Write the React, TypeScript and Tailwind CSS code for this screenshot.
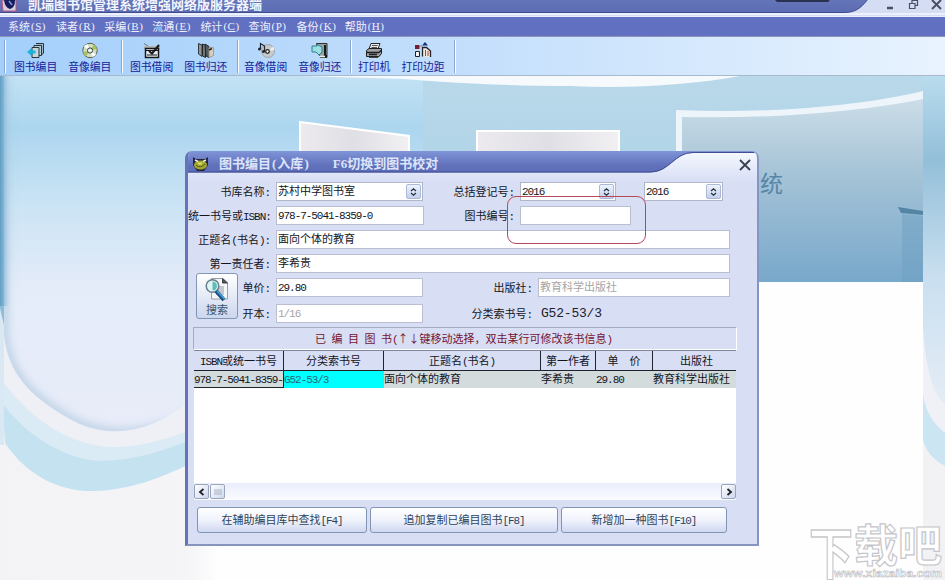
import type { ReactNode } from "react";

const MENUS = [
  ["系统", "S"],
  ["读者", "R"],
  ["采编", "B"],
  ["流通", "E"],
  ["统计", "C"],
  ["查询", "P"],
  ["备份", "K"],
  ["帮助", "H"],
];

const BOOKS = [
  {
    isbn: "978-7-5041-8359-",
    callNo: "G52-53/3",
    title: "面向个体的教育",
    author: "李希贵",
    price: "29.80",
    publisher: "教育科学出版社",
  },
];

/* Half-width runs are set in mono so every latin glyph is half a hanzi wide */
function Txt({ children }: { children: string }) {
  return (
    <>
      {children.split(/([\x21-\x7e]+)/).map((part, i) =>
        i % 2 ? (
          <span
            key={i}
            className="font-['Liberation_Mono',monospace] text-[11px] tracking-[-1.05px]"
          >
            {part}
          </span>
        ) : (
          part
        ),
      )}
    </>
  );
}

function Icon({ children }: { children: ReactNode }) {
  return (
    <svg width="18" height="17" viewBox="0 0 18 17" fill="none">
      {children}
    </svg>
  );
}

const BooksIcon = (
  <Icon>
    <path d="M9 1.500H16.500V11L14.500 13" fill="#9db8c4" stroke="#28343f" />
    <path d="M7 3.500H14.500V13.500H7Z" fill="#b7ccd5" stroke="#28343f" />
    <path d="M5 5.500H12V15.500H5Z" fill="#c3d6dd" stroke="#28343f" />
    <path d="M0 10L4 6.500V8.500H8.500V11.500H4V13.500Z" fill="#17b6dd" />
  </Icon>
);

const DiscIcon = (
  <Icon>
    <circle cx="9" cy="8.500" r="7.200" fill="#d5dfc5" stroke="#56604f" />
    <path d="M9 8.500L3 4.500A7 7 0 0 1 6.500 2ZM9 8.500L15 12.500A7 7 0 0 1 11.500 15Z" fill="#fff" />
    <path d="M9 8.500L13 2.500A7 7 0 0 1 16 7ZM9 8.500L5 14.500A7 7 0 0 1 2 10Z" fill="#a5c05c" />
    <circle cx="9" cy="8.500" r="2.600" fill="#eef4f4" stroke="#39443e" />
  </Icon>
);

const LendIcon = (
  <Icon>
    <path d="M1 4H17V7H1Z" fill="#b5b8b8" />
    <path d="M2.500 6.500H15.500V15.500H2.500Z" fill="#e8ecec" stroke="#16181c" strokeWidth="1.500" />
    <path d="M3 8.500H15M4 13H14" stroke="#16181c" />
    <path d="M6 9L9 11.500L16 3" stroke="#16181c" strokeWidth="2" />
    <path d="M1 1.500L5 4" stroke="#777" />
  </Icon>
);

const ReturnIcon = (
  <Icon>
    <path d="M1.500 1.500L5 3V14.500L1.500 12Z" fill="#8f9697" stroke="#33383d" />
    <path d="M5.500 2L8.500 3.500V15.500L5.500 14Z" fill="#6f7778" stroke="#23282d" />
    <path d="M8 2L12 4.500V15.500L9 14Z" fill="#555d60" stroke="#23282d" />
    <path d="M12 5.500H16.500V13.500L12 15.500Z" fill="#d9cfc0" stroke="#a49b8f" />
    <path d="M12 8L15 6.500" stroke="#222" strokeWidth="1.500" />
  </Icon>
);

const MusicIcon = (
  <Icon>
    <circle cx="11" cy="9" r="6.500" fill="#c7c9cc" stroke="#a2a5a8" />
    <path d="M11 9L16 4.500A7 7 0 0 1 17.500 8Z" fill="#eceded" />
    <circle cx="10.500" cy="9.500" r="1.800" fill="#fff" stroke="#222" strokeWidth="1.300" />
    <path d="M3.500 7V1.500L7.500 4V9" stroke="#20242c" strokeWidth="1.200" />
    <circle cx="2.500" cy="7" r="1.500" fill="#20242c" />
    <circle cx="6.500" cy="9.500" r="1.500" fill="#20242c" />
  </Icon>
);

const MediaReturnIcon = (
  <Icon>
    <path d="M5.500 1.500H16V15.500H9Z" fill="#9aa3a4" stroke="#2b3033" />
    <path d="M14 3V14H16" stroke="#171b1e" strokeWidth="2" />
    <path d="M1 4H6V2.500L11 5V10L8 13L5 10H1Z" fill="#9be0e3" stroke="#2f7c8b" />
    <path d="M8 14.500H14" stroke="#e8f0f0" strokeWidth="1.500" />
  </Icon>
);

const PrinterIcon = (
  <Icon>
    <path d="M6 1.500H15L13 7H4Z" fill="#e9e9e6" stroke="#26282b" />
    <path d="M7 3.500H12.500M6.500 5.500H12" stroke="#555" />
    <path d="M1.500 8.500L4 6.500H16.500V11.500L14 14.500H1.500Z" fill="#9fa1a0" stroke="#1d1f22" />
    <path d="M2 10.500H14L16 8.500M4 12.500H12" stroke="#1d1f22" strokeWidth="1.400" />
    <path d="M4 15.500H13L15 13" stroke="#444" />
  </Icon>
);

const MarginIcon = (
  <Icon>
    <path d="M1 3H5.500V7H1Z" fill="#7c1d28" />
    <path d="M1.500 9.500H5.500V14.500H1.500Z" fill="#f2f2f2" stroke="#222" />
    <path d="M11 0L14 3.500H8Z" fill="#1c2c78" />
    <path d="M8.500 14.500V5.500H12.500L16.500 9V15" fill="#f1e7dd" stroke="#202228" strokeWidth="1.300" />
    <path d="M11.500 8V14M14 9V14" stroke="#b0423b" />
    <path d="M6.500 4H8" stroke="#222" strokeDasharray="1 1" />
  </Icon>
);

function Tool({ label, icon }: { label: string; icon: ReactNode }) {
  return (
    <button className="flex flex-col items-center pt-[5px] text-[10.8px] leading-[14px] whitespace-nowrap text-[#13219a]">
      {icon}
      <span>{label}</span>
    </button>
  );
}

function ToolSep() {
  return <div className="mt-[3px] h-[33px] w-[2px] border-l border-[#8aa6cf] bg-white" />;
}

function Label({ children, className = "" }: { children: string; className?: string }) {
  return (
    <div
      className={`h-[19px] shrink-0 text-right text-[11px] leading-[19px] whitespace-nowrap text-[#14151c] ${className}`}
    >
      <Txt>{children}</Txt>
    </div>
  );
}

function Field({
  value = "",
  color = "text-[#14151c]",
  className = "",
}: {
  value?: string;
  color?: string;
  className?: string;
}) {
  return (
    <div
      className={`h-[19px] shrink-0 border border-[#b9bed0] bg-white pl-[1px] text-[11px] leading-[15px] whitespace-nowrap ${color} ${className}`}
    >
      <Txt>{value}</Txt>
    </div>
  );
}

function Combo({ value, className = "" }: { value: string; className?: string }) {
  return (
    <div
      className={`flex h-[19px] shrink-0 justify-between border border-[#b0b7cb] bg-white pl-[1px] text-[11px] leading-[15px] text-[#14151c] ${className}`}
    >
      <span>
        <Txt>{value}</Txt>
      </span>
      <span className="m-px flex w-[15px] items-center justify-center rounded-[2px] border border-[#a9b9d6] bg-gradient-to-b from-[#eef3fe] to-[#c3d1ec]">
        <svg width="7" height="8" viewBox="0 0 7 8" fill="none" stroke="#2a3040" strokeWidth="1.2">
          <path d="M1 3L3.500 0.800L6 3M1 5L3.500 7.200L6 5" />
        </svg>
      </span>
    </div>
  );
}

function Wallpaper() {
  return (
    <svg className="absolute inset-0" width="945" height="504" viewBox="0 76 945 504">
      <defs>
        <linearGradient id="sky" x1="0" y1="0" x2="0" y2="1">
          <stop offset="0" stopColor="#c3e2f4" />
          <stop offset="0.14" stopColor="#acd6ef" />
          <stop offset="0.36" stopColor="#cce4f5" />
          <stop offset="0.58" stopColor="#e5ecf9" />
          <stop offset="1" stopColor="#e9ecf9" />
        </linearGradient>
        <linearGradient id="wall" x1="0" y1="0" x2="0" y2="1">
          <stop offset="0" stopColor="#b9d9ea" />
          <stop offset="0.35" stopColor="#b3d5e8" />
          <stop offset="1" stopColor="#9fc5dc" />
        </linearGradient>
        <linearGradient id="panel" x1="0" y1="0" x2="0" y2="1">
          <stop offset="0" stopColor="#cbdde8" />
          <stop offset="0.4" stopColor="#a6c4d7" />
          <stop offset="1" stopColor="#78a8cb" />
        </linearGradient>
        <linearGradient id="edge" x1="0" y1="0" x2="1" y2="0">
          <stop offset="0" stopColor="#5f9cc4" />
          <stop offset="1" stopColor="#a9d2ea" stopOpacity="0" />
        </linearGradient>
        <linearGradient id="strip" x1="0" y1="0" x2="0" y2="1">
          <stop offset="0" stopColor="#b9dcee" />
          <stop offset="0.25" stopColor="#93bfd9" />
          <stop offset="0.6" stopColor="#c9dfef" />
          <stop offset="1" stopColor="#e6edf7" />
        </linearGradient>
        <linearGradient id="box" x1="0" y1="0" x2="1" y2="0">
          <stop offset="0" stopColor="#eceaee" />
          <stop offset="0.5" stopColor="#dfdfe5" />
          <stop offset="1" stopColor="#f2f0f2" />
        </linearGradient>
        <linearGradient id="floor" x1="0" y1="0" x2="1" y2="0">
          <stop offset="0" stopColor="#f3f3f6" />
          <stop offset="0.2" stopColor="#f5f4f7" />
          <stop offset="0.23" stopColor="#fefefe" />
          <stop offset="1" stopColor="#fefefe" />
        </linearGradient>
        <filter id="soft">
          <feGaussianBlur stdDeviation="4" />
        </filter>
        <clipPath id="bowl">
          <path d="M4 76H423V400H190C150 435 105 440 68 418C28 395 8 372 4 335Z" />
        </clipPath>
      </defs>

      <rect y="76" width="945" height="504" fill="url(#floor)" />

      {/* ribbons below the left bowl */}
      <path d="M0 315V360L5 443C30 480 65 492 95 491C130 490 160 478 190 464V300Z" fill="#c5e2f1" />
      <path d="M0 310L4 405C30 440 70 460 100 461C135 460 160 452 190 440V300Z" fill="#dbebf5" />
      <path d="M0 310L4 383C35 425 75 445 110 447C140 447 165 440 190 430V300Z" fill="#eff0f6" />
      <path d="M0 76H10V335L4 330L0 312Z" fill="#8dbbd8" />
      <g clipPath="url(#bowl)">
        <rect y="76" width="423" height="370" fill="url(#sky)" />
        <path
          d="M4 76V335C8 372 28 395 68 418C105 440 150 435 190 416"
          fill="none"
          stroke="#a9c6dc"
          strokeWidth="8"
          opacity="0.75"
          filter="url(#soft)"
        />
      </g>
      <rect y="76" width="10" height="230" fill="url(#edge)" />
      <path d="M0 308V445H4V325Z" fill="#d9e8f3" />

      {/* back wall */}
      <rect x="423" y="76" width="500" height="206" fill="url(#wall)" />
      <path d="M300 76H740C690 85 630 89 570 86C500 86 440 82 405 79Z" fill="#f6fafd" />
      <path d="M300 122L409 136V155H300Z" fill="url(#box)" stroke="#fff" strokeWidth="2" />
      <path d="M477 131H619V155H477Z" fill="url(#box)" stroke="#fff" strokeWidth="2" />

      <path d="M676 110C770 114 860 106 923 91V282H676Z" fill="#edf5fa" />
      <path d="M682 117C770 119 860 112 923 99V282H682Z" fill="url(#panel)" />
      <path d="M898 207L923 211V215L901 213Z" fill="#5585a5" />
      <path d="M902 214L923 216V282H902Z" fill="#6d9fc2" opacity="0.5" />
      <text
        x="760"
        y="192"
        fontSize="23"
        fill="#5886a6"
        fontFamily="'Noto Sans CJK SC', sans-serif"
      >
        统
      </text>

      {/* right column */}
      <path d="M923 76H945V580H923Z" fill="#f2f2f5" />
      <path d="M923 76H945V410C934 396 926 375 923 330Z" fill="url(#strip)" />
      <path d="M923 330C926 372 934 394 945 405V433C934 425 926 412 923 395Z" fill="#eff1f6" />
      <path d="M923 395C926 412 934 425 945 433V466C934 460 926 452 923 440Z" fill="#cbe5f2" />
    </svg>
  );
}

function TitleTab() {
  return (
    <svg className="absolute top-0 left-0" width="570" height="31" viewBox="0 0 570 31">
      <defs>
        <linearGradient id="tab" x1="0" y1="0" x2="0" y2="1">
          <stop offset="0" stopColor="#f4f7ff" />
          <stop offset="1" stopColor="#d8def4" />
        </linearGradient>
      </defs>
      <path
        d="M0 21.500H462C482 21.500 486 2 505 2H566Q570 2 570 6V31H0Z"
        fill="url(#tab)"
      />
      <path d="M0 21H462C482 21 486 1.500 505 1.500H566" fill="none" stroke="#414d92" />
    </svg>
  );
}

function SearchButton() {
  return (
    <button className="ml-2 flex h-[46px] w-[42px] shrink-0 flex-col items-center rounded-[3px] border border-[#8195b5] bg-gradient-to-b from-white to-[#ccd6ee] pt-[3px]">
      <svg width="26" height="25" viewBox="0 0 26 25" fill="none">
        <path d="M7.500 1.500H19L23.500 6V22H7.500Z" fill="#f5f6f8" stroke="#9a9ea6" />
        <path d="M18.500 1.500V6H23.500Z" fill="#4c5157" stroke="#444" />
        <path d="M12 9H20V18H12Z" fill="#c5c8d0" />
        <circle cx="8.500" cy="9" r="6.300" fill="#dff4f4" stroke="#6b7e8b" strokeWidth="1.500" />
        <path d="M8.500 4.500A4.500 4.500 0 0 1 8.500 13.500Z" fill="#62bcb9" />
        <path d="M12 14L20 23" stroke="#1d4f83" strokeWidth="4" />
        <path d="M13 14L20.500 22" stroke="#3aa0d8" strokeWidth="1.800" />
      </svg>
      <span className="text-[11px] leading-[15px] text-[#35546f]">搜索</span>
    </button>
  );
}

function ScrollCap({ children }: { children: ReactNode }) {
  return (
    <span className="flex h-[15px] w-[15px] items-center justify-center rounded-[2px] border border-[#9aa5bd] bg-gradient-to-br from-white to-[#cdd7ee]">
      <svg width="10" height="10" viewBox="0 0 10 10" fill="none">
        {children}
      </svg>
    </span>
  );
}

function BookTable() {
  const head = "border-r border-[#20222c] last:border-r-0";
  return (
    <div className="mx-[6px] h-[150px] w-[542px] border-t border-[#7f8598] bg-white text-[11px] text-[#14151c]">
      <div className="grid h-[20px] grid-cols-[90px_100px_157px_55px_57px_83px] grid-rows-[19px] border-b border-[#20222c] bg-[#d8def4] text-center leading-[19px] whitespace-nowrap">
        <span className={head}>
          <Txt>ISBN或统一书号</Txt>
        </span>
        <span className={head}>分类索书号</span>
        <span className={head}>
          <Txt>正题名(书名)</Txt>
        </span>
        <span className={head}>第一作者</span>
        <span className={head}>单&emsp;价</span>
        <span className={`${head} pl-1`}>出版社</span>
      </div>
      {BOOKS.map((b) => (
        <div
          key={b.isbn}
          className="grid h-[17px] grid-cols-[90px_100px_157px_55px_57px_83px] grid-rows-[17px] bg-[#d3dbdc] leading-[15px] whitespace-nowrap"
        >
          <span className="border-r border-b border-[#20222c]">
            <Txt>{b.isbn}</Txt>
          </span>
          <span className="bg-[#00ffff] text-[#25697c]">
            <Txt>{b.callNo}</Txt>
          </span>
          <span>{b.title}</span>
          <span>{b.author}</span>
          <span>
            <Txt>{b.price}</Txt>
          </span>
          <span>{b.publisher}</span>
        </div>
      ))}
      <div className="mt-[95px] flex h-[17px] items-center justify-between bg-gradient-to-b from-[#e9eefb] to-[#fafbff]">
        <div className="flex gap-px">
          <ScrollCap>
            <path d="M6.500 2L3 5L6.500 8" stroke="#222" strokeWidth="1.800" />
          </ScrollCap>
          <ScrollCap>
            <path d="M1 3H9M1 5H9M1 7H9" stroke="#aab2c4" />
          </ScrollCap>
        </div>
        <ScrollCap>
          <path d="M3.500 2L7 5L3.500 8" stroke="#222" strokeWidth="1.800" />
        </ScrollCap>
      </div>
    </div>
  );
}

function ActionButton({ label, className }: { label: string; className: string }) {
  return (
    <button
      className={`h-[26px] rounded-[3px] border border-[#8294b4] bg-gradient-to-b from-white via-[#f0f3fc] to-[#cfd8f0] text-[11px] leading-[22px] text-[#2f4358] ${className}`}
    >
      <Txt>{label}</Txt>
    </button>
  );
}

function CatalogDialog() {
  return (
    <div className="absolute top-[75px] left-[185px] h-[395px] w-[574px] overflow-hidden rounded-t-[7px] border-r-2 border-b-2 border-l-[3px] border-r-[#8795c4] border-b-[#8795bd] border-l-[#6673b8] bg-[#d8def4]">
      <div className="relative flex h-[31px] items-start bg-gradient-to-b from-[#8094d8] via-[#5f6fb9] to-[#5c6bb4]">
        <TitleTab />
        <svg className="relative mt-[5px] ml-1" width="17" height="16" viewBox="0 0 17 16">
          <path d="M1 1L4 3H13L16 1V9L12 15H5L1 9Z" fill="#26283a" />
          <ellipse cx="8.500" cy="9" rx="6.500" ry="4.500" fill="#a3a632" />
          <path d="M3 4L6 5.500M14 4L11 5.500" stroke="#e9edf5" strokeWidth="1.500" />
          <path d="M4 9Q8 13 13 8" stroke="#555b14" fill="none" />
          <ellipse cx="8" cy="7.500" rx="2.500" ry="1.300" fill="#d6d765" />
        </svg>
        <h2 className="relative pt-[4px] pl-[10px] font-['Liberation_Serif','Noto_Sans_CJK_SC',serif] text-[13px] leading-[18px] font-bold whitespace-pre text-[#dce4fa]">
          图书编目<span className="mx-[1px]">(</span>入库<span className="mx-[1px]">)</span>
          <span className="ml-[23px]">F6</span>切换到图书校对
        </h2>
        <svg
          className="relative mt-[8px] mr-[6px] ml-auto"
          width="12"
          height="12"
          viewBox="0 0 12 12"
          stroke="#3a4054"
          strokeWidth="1.800"
        >
          <path d="M1 1L11 11M11 1L1 11" />
        </svg>
      </div>

      <div className="flex">
        <Label className="w-[88px] pr-[6px]">书库名称:</Label>
        <Combo value="苏村中学图书室" className="w-[147px]" />
        <Label className="w-[97px] pr-[6px]">总括登记号:</Label>
        <Combo value="2016" className="w-[96px]" />
        <Combo value="2016" className="ml-[28px] w-[79px]" />
      </div>
      <div className="mt-[5px] flex">
        <Label className="w-[88px] pr-[6px]">统一书号或ISBN:</Label>
        <Field value="978-7-5041-8359-0" className="w-[148px]" />
        <Label className="w-[96px] pr-[6px]">图书编号:</Label>
        <Field className="w-[111px]" />
      </div>
      <div className="mt-[5px] flex">
        <Label className="w-[88px] pr-[6px]">正题名(书名):</Label>
        <Field value="面向个体的教育" className="w-[454px]" />
      </div>
      <div className="mt-[5px] flex">
        <Label className="w-[88px] pr-[6px]">第一责任者:</Label>
        <Field value="李希贵" className="w-[454px]" />
      </div>
      <div className="flex h-[50px]">
        <SearchButton />
        <div className="pt-[5px]">
          <div className="flex">
            <Label className="w-[38px] pr-[6px]">单价:</Label>
            <Field value="29.80" className="w-[147px]" />
            <Label className="w-[115px] pr-[6px]">出版社:</Label>
            <Field value="教育科学出版社" color="text-[#a5a5a5]" className="w-[192px]" />
          </div>
          <div className="mt-[7px] flex">
            <Label className="w-[38px] pr-[6px]">开本:</Label>
            <Field value="1/16" color="text-[#a5a5a5]" className="w-[147px]" />
            <Label className="w-[115px] pr-[6px]">分类索书号:</Label>
            <span className="h-[19px] pl-[3px] font-['Liberation_Mono',monospace] text-[13px] leading-[20px] tracking-[-0.2px] text-[#20222c]">
              G52-53/3
            </span>
          </div>
        </div>
      </div>

      <div className="mx-[5px] mt-[4px] h-[23px] w-[544px] border border-[#a7adc0] border-r-white border-b-white pr-[3px] text-center text-[11px] leading-[21px] whitespace-nowrap text-[#741431]">
        <span className="tracking-[5.500px]">已编目图</span>书
        <Txt>(↑↓键移动选择，双击某行可修改该书信息)</Txt>
      </div>
      <BookTable />

      <div className="mt-[7px] ml-[9px] flex gap-[3px]">
        <ActionButton label="在辅助编目库中查找[F4]" className="w-[170px]" />
        <ActionButton label="追加复制已编目图书[F8]" className="w-[188px]" />
        <ActionButton label="新增加一种图书[F10]" className="w-[166px]" />
      </div>
    </div>
  );
}

function Watermark() {
  return (
    <svg className="absolute top-[440px] left-[800px]" width="145" height="64" viewBox="0 0 145 64">
      <g
        fill="#ffffff"
        stroke="#c6c6ca"
        fontFamily="'Noto Sans CJK SC', sans-serif"
        fontWeight="bold"
      >
        {/* the first glyph is stretched down past the other two */}
        <text x="9" y="45" fontSize="44" strokeWidth="1.100" transform="matrix(1 0 0 1.300 0 -1)">
          下
        </text>
        <text x="54" y="46" fontSize="44" strokeWidth="1.200">
          载吧
        </text>
        <text
          x="34"
          y="61"
          fontSize="11"
          textLength="108"
          lengthAdjust="spacingAndGlyphs"
          strokeWidth="0.500"
          stroke="#b4b4ba"
          fontFamily="'Liberation Sans', sans-serif"
        >
          www.xiazaiba.com
        </text>
      </g>
    </svg>
  );
}

export default function App() {
  return (
    <div className="flex h-[580px] w-[945px] flex-col overflow-hidden font-['Noto_Sans_CJK_SC',sans-serif]">
      <header className="relative flex h-[17px] shrink-0 items-start overflow-hidden border-b border-[#e8edfb] bg-gradient-to-b from-[#6575b9] to-[#5a69b0]">
        <svg className="absolute inset-0" width="945" height="17" viewBox="0 0 945 17">
          <path d="M0 12.500H845C858 12.500 864 4 868 -1H945V17H0Z" fill="#d5ddf5" />
          <path d="M0 12.500H845C858 12.500 864 4 868 -1" fill="none" stroke="#3f4c8f" />
          <path d="M0 14H945" stroke="#f4f7ff" strokeWidth="1.500" />
          <path d="M775 0H830L828 2H777Z" fill="#283150" />
          <path d="M2 0H16V11H3Z" fill="#d9cfe4" stroke="#b1597a" />
          <path d="M4 0H15Q15 8 10 9Q5 8 4 0Z" fill="#151c5c" />
          <path d="M9 1L12 5" stroke="#7e92e6" strokeWidth="1.500" />
          <path d="M887 8H893" stroke="#4a4f63" strokeWidth="2.500" />
          <path d="M909.500 3.500H915V8.500H909.500ZM912 3V0.500H917.500V5.500H915" fill="none" stroke="#4a4f63" strokeWidth="1.200" />
          <path d="M932 0L941 9M941 0L932 9" stroke="#4a4f63" strokeWidth="2" />
        </svg>
        <h1 className="relative -mt-[5px] ml-[28px] text-[13px] leading-[18px] font-bold text-[#f2f5ff]">
          凯瑞图书馆管理系统增强网络版服务器端
        </h1>
      </header>

      <nav className="flex h-[19px] shrink-0 items-center bg-[#6170c0] pl-2 text-[11px] leading-[17px] text-[#edf1ff]">
        {MENUS.map(([name, key]) => (
          <span key={key} className="flex w-[48.1px] whitespace-nowrap">
            {name}
            <span className="ml-[1px] font-['Liberation_Serif',serif] text-[11px] tracking-[0.5px]">
              (<u>{key}</u>)
            </span>
          </span>
        ))}
      </nav>

      <div className="flex h-[40px] shrink-0 border-t border-b border-t-[#8d94b8] border-b-[#a9b9cc] bg-gradient-to-r from-[#a4cffb] via-[#c4dffc] to-[#e8f3fe] pl-[4px]">
        <ToolSep />
        <div className="flex w-[115px] gap-[11px] pl-[8px]">
          <Tool label="图书编目" icon={BooksIcon} />
          <Tool label="音像编目" icon={DiscIcon} />
        </div>
        <ToolSep />
        <div className="flex w-[114px] gap-[11px] pl-[7px]">
          <Tool label="图书借阅" icon={LendIcon} />
          <Tool label="图书归还" icon={ReturnIcon} />
        </div>
        <ToolSep />
        <div className="flex w-[111px] gap-[11px] pl-[5px]">
          <Tool label="音像借阅" icon={MusicIcon} />
          <Tool label="音像归还" icon={MediaReturnIcon} />
        </div>
        <ToolSep />
        <div className="flex w-[102px] gap-[11px] pl-[6px]">
          <Tool label="打印机" icon={PrinterIcon} />
          <Tool label="打印边距" icon={MarginIcon} />
        </div>
        <ToolSep />
      </div>

      <main className="relative h-[504px] shrink-0">
        <Wallpaper />
        <CatalogDialog />
        {/* hand-drawn callout around the book number field */}
        <div className="absolute top-[120px] left-[507px] h-[48px] w-[139px] rounded-[9px] border border-[#b5485c]" />
        <Watermark />
      </main>
    </div>
  );
}
